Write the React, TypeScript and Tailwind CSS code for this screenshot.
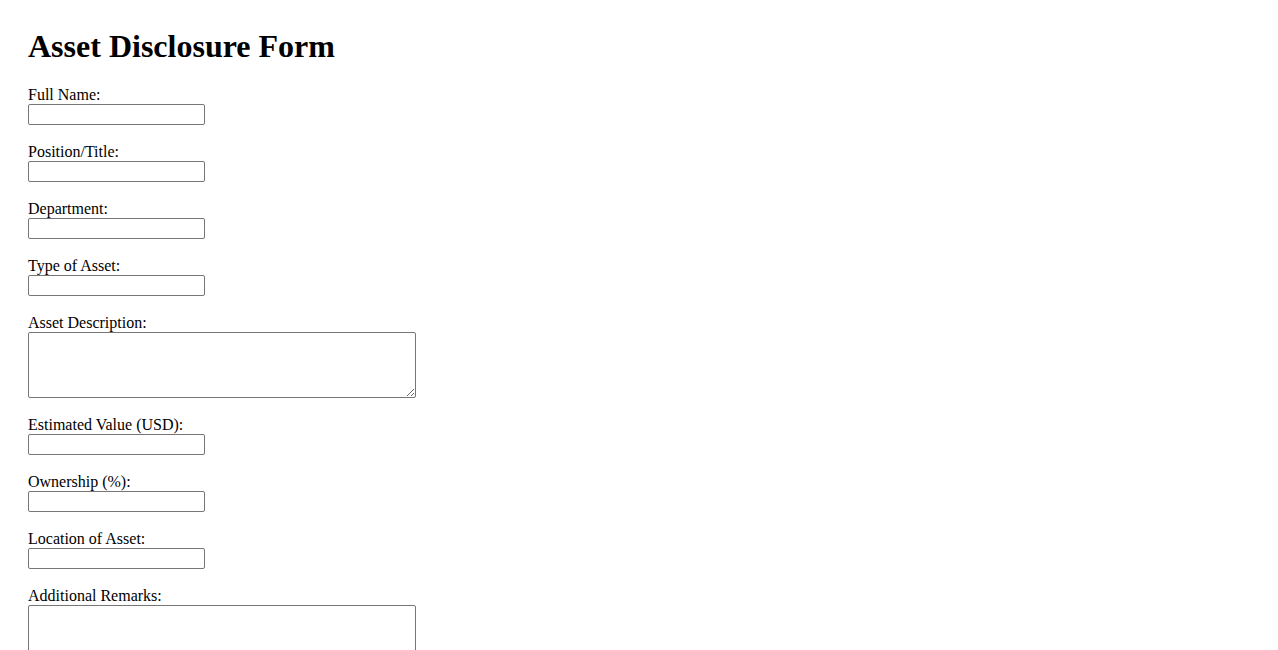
const fields: { label: string; type: "input" | "textarea" }[] = [
  { label: "Full Name:", type: "input" },
  { label: "Position/Title:", type: "input" },
  { label: "Department:", type: "input" },
  { label: "Type of Asset:", type: "input" },
  { label: "Asset Description:", type: "textarea" },
  { label: "Estimated Value (USD):", type: "input" },
  { label: "Ownership (%):", type: "input" },
  { label: "Location of Asset:", type: "input" },
  { label: "Additional Remarks:", type: "textarea" },
];

export default function App() {
  return (
    <div className="min-h-screen bg-white px-[28px] pt-[28px] text-black font-['Liberation_Serif',serif]">
      <h1 className="text-[32px] font-bold leading-[37px]">Asset Disclosure Form</h1>
      <form className="mt-[21px] flex flex-col">
        {fields.map((f) => (
          <div key={f.label} className="mb-[18px] flex flex-col items-start">
            <label className="h-[18px] text-[16px] leading-[18px]">{f.label}</label>
            {f.type === "input" ? (
              <input
                type="text"
                className="h-[21px] w-[177px] rounded-[2px] border border-[#767676] bg-white px-[2px] text-[13px]"
              />
            ) : (
              <textarea className="h-[66px] w-[388px] rounded-[2px] border border-[#767676] bg-white px-[2px] text-[13px]" />
            )}
          </div>
        ))}
      </form>
    </div>
  );
}
